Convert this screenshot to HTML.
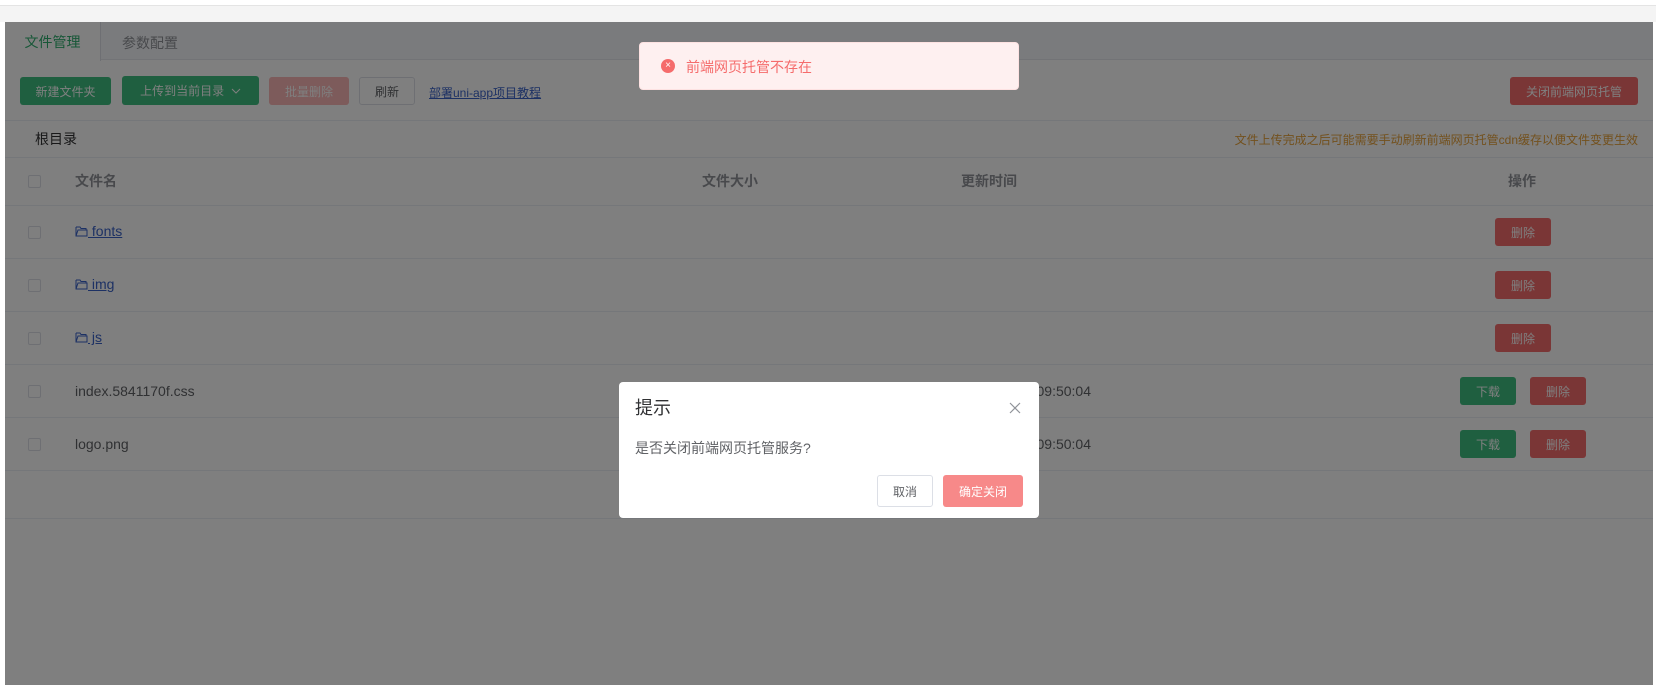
<!DOCTYPE html>
<html><head><meta charset="utf-8"><style>
*{box-sizing:border-box;margin:0;padding:0}
body{width:1656px;height:685px;overflow:hidden;background:#fff;font-family:"Liberation Sans","Noto Sans CJK SC",sans-serif;position:relative;color:#606266}
.a{position:absolute}
.btn{position:absolute;border-radius:3px;font-size:12px;color:#fff;display:flex;align-items:center;justify-content:center}
.g{background:#3fbf80}.r{background:#f56c6c}
.line{position:absolute;left:5px;right:3px;height:1px;background:#ebeef5}
.cb{position:absolute;left:28px;width:13px;height:13px;border:1px solid #dcdfe6;border-radius:2px;background:#fff}
.fn{position:absolute;left:75px;font-size:14px}
a{color:#3a62c8;text-decoration:underline}
.fi{display:inline-block;vertical-align:-1px}
</style></head><body>
<div class="a" style="left:0;top:0;width:1656px;height:6px;background:#fff;border-bottom:1px solid #e4e4e4"></div>
<div class="a" style="left:0;top:6px;width:1656px;height:16px;background:#f4f4f4"></div>
<div class="a" style="left:5px;top:22px;width:1648px;height:663px;background:#fff"></div>
<div class="a" style="left:5px;top:22px;width:1648px;height:38px;background:#f5f7fa;border-bottom:1px solid #e4e7ed"></div>
<div class="a" style="left:5px;top:22px;width:96px;height:39px;background:#fff;border-right:1px solid #dcdfe6;color:#2fae6f;font-size:14px;display:flex;align-items:center;justify-content:center">文件管理</div>
<div class="a" style="left:122px;top:33px;font-size:14px;color:#909399">参数配置</div>
<div class="btn g" style="left:20px;top:77px;width:91px;height:28px">新建文件夹</div>
<div class="btn g" style="left:122px;top:76px;width:137px;height:29px">上传到当前目录&nbsp;&nbsp;<svg width="10" height="6"><path d="M1 1L5 5L9 1" stroke="#fff" fill="none"/></svg></div>
<div class="btn" style="left:269px;top:77px;width:80px;height:28px;background:#fab6b6">批量删除</div>
<div class="btn" style="left:359px;top:77px;width:56px;height:28px;background:#fff;border:1px solid #dcdfe6;color:#606266">刷新</div>
<div class="a" style="left:429px;top:84px;font-size:12px"><a>部署uni-app项目教程</a></div>
<div class="btn r" style="left:1510px;top:77px;width:128px;height:28px">关闭前端网页托管</div>
<div class="line" style="top:120px"></div>
<div class="a" style="left:35px;top:129px;font-size:14px;color:#303133">根目录</div>
<div class="a" style="right:18px;top:131px;font-size:12px;color:#e6a23c">文件上传完成之后可能需要手动刷新前端网页托管cdn缓存以便文件变更生效</div>
<div class="line" style="top:157px"></div>
<div class="cb" style="top:175px"></div>
<div class="a" style="left:75px;top:171px;font-size:14px;font-weight:bold;color:#909399">文件名</div>
<div class="a" style="left:702px;top:171px;font-size:14px;font-weight:bold;color:#909399">文件大小</div>
<div class="a" style="left:961px;top:171px;font-size:14px;font-weight:bold;color:#909399">更新时间</div>
<div class="a" style="left:1508px;top:171px;font-size:14px;font-weight:bold;color:#909399">操作</div>
<div class="line" style="top:205px"></div>
<div class="cb" style="top:226px"></div><div class="fn" style="top:223px"><a><svg class="fi" width="13" height="12"><path d="M1 2H5L6 3.5H11V5M1 2V11H12L12 5H3L1 11" stroke="#3a62c8" fill="none"/></svg> fonts</a></div>
<div class="btn r" style="left:1495px;top:218px;width:56px;height:28px">删除</div>
<div class="line" style="top:258px"></div>
<div class="cb" style="top:279px"></div><div class="fn" style="top:276px"><a><svg class="fi" width="13" height="12"><path d="M1 2H5L6 3.5H11V5M1 2V11H12L12 5H3L1 11" stroke="#3a62c8" fill="none"/></svg> img</a></div>
<div class="btn r" style="left:1495px;top:271px;width:56px;height:28px">删除</div>
<div class="line" style="top:311px"></div>
<div class="cb" style="top:332px"></div><div class="fn" style="top:329px"><a><svg class="fi" width="13" height="12"><path d="M1 2H5L6 3.5H11V5M1 2V11H12L12 5H3L1 11" stroke="#3a62c8" fill="none"/></svg> js</a></div>
<div class="btn r" style="left:1495px;top:324px;width:56px;height:28px">删除</div>
<div class="line" style="top:364px"></div>
<div class="cb" style="top:385px"></div><div class="fn" style="top:383px">index.5841170f.css</div>
<div class="a" style="right:565px;top:383px;font-size:14px">2023-10-10 09:50:04</div>
<div class="btn g" style="left:1460px;top:377px;width:56px;height:28px">下载</div>
<div class="btn r" style="left:1530px;top:377px;width:56px;height:28px">删除</div>
<div class="line" style="top:417px"></div>
<div class="cb" style="top:438px"></div><div class="fn" style="top:436px">logo.png</div>
<div class="a" style="right:565px;top:436px;font-size:14px">2023-10-10 09:50:04</div>
<div class="btn g" style="left:1460px;top:430px;width:56px;height:28px">下载</div>
<div class="btn r" style="left:1530px;top:430px;width:56px;height:28px">删除</div>
<div class="line" style="top:470px"></div>
<div class="line" style="top:518px"></div>
<div class="a" style="left:5px;top:22px;width:1648px;height:663px;background:rgba(0,0,0,.5)"></div>
<div class="a" style="left:639px;top:42px;width:380px;height:48px;background:#fef0f0;border:1px solid #fde2e2;border-radius:4px"></div>
<div class="a" style="left:661px;top:59px;width:14px;height:14px;border-radius:50%;background:#f56c6c;color:#fff;font-size:10px;line-height:14px;text-align:center">×</div>
<div class="a" style="left:686px;top:57px;font-size:14px;color:#f56c6c">前端网页托管不存在</div>
<div class="a" style="left:619px;top:382px;width:420px;height:136px;background:#fff;border-radius:4px"></div>
<div class="a" style="left:635px;top:394px;font-size:18px;color:#303133">提示</div>
<svg class="a" style="left:1009px;top:402px" width="12" height="12"><path d="M1 1L11 11M11 1L1 11" stroke="#909399" stroke-width="1.2"/></svg>
<div class="a" style="left:635px;top:438px;font-size:14px;color:#606266">是否关闭前端网页托管服务?</div>
<div class="btn" style="left:877px;top:475px;width:56px;height:32px;background:#fff;border:1px solid #dcdfe6;color:#606266">取消</div>
<div class="btn" style="left:943px;top:475px;width:80px;height:32px;background:#f78989">确定关闭</div>
</body></html>
